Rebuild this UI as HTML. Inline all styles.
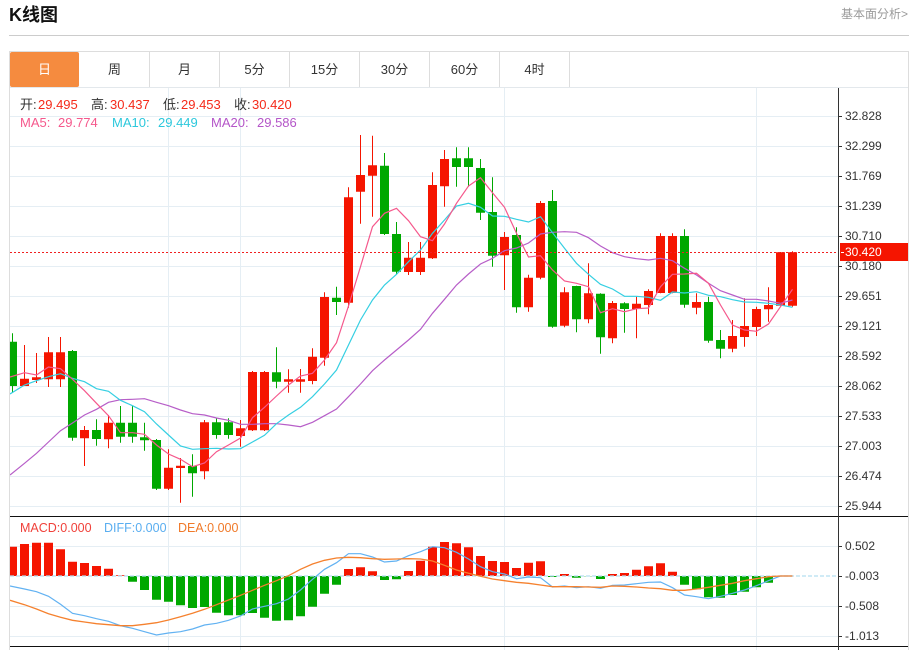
<!DOCTYPE html>
<html lang="zh">
<head>
<meta charset="utf-8">
<title>K线图</title>
<style>
html,body{margin:0;padding:0;background:#fff;}
body{width:911px;height:650px;position:relative;overflow:hidden;font-family:"Liberation Sans","Noto Sans CJK SC",sans-serif;}
.t{position:absolute;white-space:pre;line-height:16px;}
.tab{position:absolute;top:52px;height:35px;line-height:36px;width:69px;text-align:center;font-size:13px;color:#333;border-right:1px solid #ddd;}
.tab.on{left:10px;background:#f58b3f;color:#fff;border-right:0;width:69px;border-radius:2px;}
.ax{position:absolute;left:845px;font-size:12px;line-height:14px;color:#333;}
.lg{font-size:13px;}
</style>
</head>
<body>
<div class="t" style="left:9px;top:5px;font-size:18px;line-height:21px;font-weight:bold;color:#111;">K线图</div>
<div class="t" style="left:841px;top:6px;font-size:12px;color:#9a9a9a;">基本面分析&gt;</div>
<div style="position:absolute;left:9px;top:35px;width:900px;height:1px;background:#ccc;"></div>
<div style="position:absolute;left:9px;top:51px;width:900px;height:1px;background:#ddd;"></div>
<div style="position:absolute;left:9px;top:87px;width:900px;height:1px;background:#e3e8ec;"></div>
<div style="position:absolute;left:9px;top:51px;width:1px;height:599px;background:#ddd;"></div>
<div style="position:absolute;left:908px;top:51px;width:1px;height:599px;background:#ddd;"></div>
<div class="tab on">日</div>
<div class="tab" style="left:80px;">周</div>
<div class="tab" style="left:150px;">月</div>
<div class="tab" style="left:220px;">5分</div>
<div class="tab" style="left:290px;">15分</div>
<div class="tab" style="left:360px;">30分</div>
<div class="tab" style="left:430px;">60分</div>
<div class="tab" style="left:500px;">4时</div>

<svg width="911" height="650" viewBox="0 0 911 650" style="position:absolute;left:0;top:0;">
<clipPath id="c"><rect x="10" y="88" width="828" height="562"/></clipPath>
<g stroke="#e5eef4" stroke-width="1" fill="none">
<path d="M10 116.5H838M10 146.5H838M10 176.5H838M10 206.5H838M10 236.5H838M10 266.5H838M10 296.5H838M10 326.5H838M10 356.5H838M10 386.5H838M10 416.5H838M10 446.5H838M10 476.5H838M10 506.5H838M10 546.5H838M10 606.5H838M10 636.5H838"/>
<path d="M168.5 88V650M240.5 88V650M504.5 88V650M756.5 88V650"/>
</g>
<g clip-path="url(#c)">
<path fill="#f51500" d="M20 378.7h9V386h-9zM24 345h1V386h-1zM32 377.3h9V380h-9zM36 353h1V383h-1zM44 352.3h9V379.3h-9zM48 337h1V387h-1zM56 352.3h9V379.3h-9zM60 337h1V387h-1zM80 430h9V438.3h-9zM84 426h1V466h-1zM104 422.7h9V439.3h-9zM108 415h1V448.3h-1zM164 467.7h9V488.7h-9zM168 449.3h1V490h-1zM176 465.7h9V468h-9zM180 458h1V502.7h-1zM200 422.3h9V471.3h-9zM204 420h1V479.3h-1zM236 428.3h9V436h-9zM240 420h1V446.7h-1zM248 372h9V430.3h-9zM252 371h1V431h-1zM260 372h9V430.3h-9zM264 371h1V431h-1zM284 379.3h9V381.7h-9zM288 369.3h1V392.7h-1zM296 379.3h9V381.7h-9zM300 369h1V392.7h-1zM308 356.7h9V381h-9zM312 348.3h1V384.3h-1zM320 297h9V357.7h-9zM324 292.3h1V365.7h-1zM344 197.3h9V302.7h-9zM348 187.3h1V307.7h-1zM356 175h9V191.7h-9zM360 135h1V223.7h-1zM368 165.3h9V175.7h-9zM372 135.7h1V216.7h-1zM404 257.7h9V272h-9zM408 242h1V275h-1zM416 257.7h9V272h-9zM420 242h1V275h-1zM428 185h9V258.3h-9zM432 172.3h1V259h-1zM440 159h9V186.3h-9zM444 150h1V206.7h-1zM500 237h9V255.3h-9zM504 232h1V290h-1zM524 277.7h9V307.3h-9zM528 274.7h1V311.7h-1zM536 203h9V277.7h-9zM540 201h1V279.3h-1zM560 292.3h9V325.7h-9zM564 287.3h1V327.3h-1zM584 293.3h9V319.3h-9zM588 263.3h1V323.3h-1zM608 303h9V338.3h-9zM612 301h1V343.3h-1zM632 303.7h9V309h-9zM636 296.7h1V338.3h-1zM644 291h9V305h-9zM648 289.3h1V314.3h-1zM656 236h9V293h-9zM660 233.3h1V293.3h-1zM668 236h9V293h-9zM672 233.3h1V293.3h-1zM692 302h9V307.7h-9zM696 293.3h1V314.3h-1zM728 336h9V348.7h-9zM732 320h1V352.3h-1zM740 326h9V337h-9zM744 298.3h1V346.7h-1zM752 309h9V327h-9zM756 306.7h1V336h-1zM764 305h9V309.3h-9zM768 287.3h1V321.7h-1zM776 252.3h9V305.7h-9zM780 252h1V306h-1zM788 252.3h9V305.7h-9zM792 251.3h1V306.7h-1z"/>
<path fill="#00a800" d="M10 341.7h7V386h-7zM12 333.3h1V393h-1zM68 351h9V437.7h-9zM72 350h1V440.7h-1zM92 430h9V439h-9zM96 419.3h1V445.7h-1zM116 422.7h9V436.7h-9zM120 406h1V442.7h-1zM128 422.7h9V436.7h-9zM132 406h1V442.7h-1zM140 437.3h9V440.3h-9zM144 422.7h1V450.7h-1zM152 440h9V488.7h-9zM156 439h1V490h-1zM188 466h9V473.3h-9zM192 454.3h1V496.7h-1zM212 422.3h9V435h-9zM216 418.3h1V438.7h-1zM224 422.3h9V435h-9zM228 418.3h1V438.7h-1zM272 372.3h9V381.7h-9zM276 347.3h1V388.3h-1zM332 297.7h9V302h-9zM336 286.7h1V315h-1zM380 165.7h9V234h-9zM384 153h1V235h-1zM392 234h9V271.7h-9zM396 222h1V274h-1zM452 158.3h9V167h-9zM456 147.3h1V186.7h-1zM464 158.3h9V167h-9zM468 147.3h1V186.7h-1zM476 168h9V212.7h-9zM480 159h1V220h-1zM488 212h9V255.7h-9zM492 177.3h1V266.7h-1zM512 235h9V307.3h-9zM516 227.3h1V312.7h-1zM548 201h9V326.7h-9zM552 190h1V327.7h-1zM572 286h9V319.3h-9zM576 285.7h1V332.3h-1zM596 293.7h9V337.3h-9zM600 293.3h1V353.7h-1zM620 303.3h9V309h-9zM624 302.3h1V332.7h-1zM680 236h9V304.7h-9zM684 229.3h1V307.7h-1zM704 302h9V340.7h-9zM708 296.7h1V342.7h-1zM716 340h9V348.7h-9zM720 330h1V358.3h-1z"/>
<polyline fill="none" stroke="#b75ec8" stroke-width="1.2" points="10,475 24.5,463.3 36.5,453.3 48.5,442 60.5,430.7 72.5,423 84.5,415 96.5,409.3 108.5,402.3 120.5,399.7 132.5,399.3 144.5,398.7 156.5,402.3 168.5,405.7 180.5,410 192.5,413.7 204.5,415 216.5,418 228.5,420.3 240.5,424.3 252.5,424.3 264.5,423.7 276.5,423.7 288.5,425 300.5,426.7 312.5,422.3 324.5,415.7 336.5,409 348.5,396.7 360.5,384 372.5,370.7 384.5,360 396.5,350 408.5,340 420.5,329.3 432.5,313.3 444.5,299.3 456.5,285 468.5,274 480.5,264 492.5,258.3 504.5,250.7 516.5,248 528.5,243 540.5,234 552.5,232.3 564.5,231.7 576.5,232.3 588.5,237.7 600.5,246 612.5,252.7 624.5,256.7 636.5,258.7 648.5,260 660.5,258.3 672.5,260.7 684.5,268.3 696.5,275 708.5,283.3 720.5,290.7 732.5,295 744.5,299.3 756.5,299.3 768.5,301 780.5,303.3 792.5,300"/>
<polyline fill="none" stroke="#35cfe2" stroke-width="1.2" points="10,394 24.5,385 36.5,380.7 48.5,376.7 60.5,373.7 72.5,378.3 84.5,381.7 96.5,388.7 108.5,391.3 120.5,400.3 132.5,405.7 144.5,411.7 156.5,424 168.5,435 180.5,446 192.5,449.3 204.5,448.7 216.5,448.3 228.5,449 240.5,448.7 252.5,442 264.5,435.3 276.5,423.7 288.5,415 300.5,407.3 312.5,396.7 324.5,384 336.5,370 348.5,345 360.5,320 372.5,300 384.5,285 396.5,274.3 408.5,261.7 420.5,250 432.5,233.3 444.5,220 456.5,206 468.5,203.3 480.5,207.3 492.5,216 504.5,216.3 516.5,219.3 528.5,222 540.5,216.7 552.5,232.7 564.5,248.3 576.5,263.3 588.5,274.3 600.5,284.3 612.5,289 624.5,296.3 636.5,296.3 648.5,297.3 660.5,300.3 672.5,292 684.5,293 696.5,291.7 708.5,295.3 720.5,296.7 732.5,299.7 744.5,302 756.5,302.3 768.5,303.3 780.5,305 792.5,307.3"/>
<polyline fill="none" stroke="#f5588c" stroke-width="1.2" points="10,377 24.5,372.7 36.5,375 48.5,367 60.5,368.7 72.5,379.3 84.5,390.7 96.5,403.3 108.5,415.7 120.5,432.7 132.5,432.7 144.5,434.3 156.5,445 168.5,454 180.5,459.3 192.5,466.7 204.5,463 216.5,451.7 228.5,445 240.5,438 252.5,417.7 264.5,407.3 276.5,396 288.5,385 300.5,376 312.5,373.3 324.5,360 336.5,342.7 348.5,306 360.5,266.7 372.5,226.7 384.5,213.3 396.5,208.3 408.5,220.7 420.5,236.7 432.5,240.7 444.5,224 456.5,203.3 468.5,186 480.5,177.7 492.5,192.7 504.5,207.3 516.5,233.3 528.5,257 540.5,255.7 552.5,270 564.5,281 576.5,283.3 588.5,286.7 600.5,312.7 612.5,308.7 624.5,311.7 636.5,308.7 648.5,308 660.5,286.7 672.5,274.3 684.5,274 696.5,273.3 708.5,283.3 720.5,305 732.5,325 744.5,330 756.5,331.3 768.5,324 780.5,306.7 792.5,289.3"/>
<path d="M10 252.5H838" stroke="#f02020" stroke-width="1" stroke-dasharray="2 2" fill="none"/>
<path fill="#f51500" d="M10 546.7h7V576h-7zM20 544h9V576h-9zM32 542.7h9V576h-9zM44 542.7h9V576h-9zM56 549.3h9V576h-9zM68 561.7h9V576h-9zM80 563h9V576h-9zM92 566h9V576h-9zM104 568.7h9V576h-9zM116 575.3h9V576h-9zM344 569h9V576h-9zM356 567.3h9V576h-9zM368 571.3h9V576h-9zM404 571h9V576h-9zM416 560.7h9V576h-9zM428 546.7h9V576h-9zM440 542h9V576h-9zM452 543.3h9V576h-9zM464 547.3h9V576h-9zM476 556h9V576h-9zM488 561h9V576h-9zM500 562h9V576h-9zM512 568h9V576h-9zM524 562.7h9V576h-9zM536 561.3h9V576h-9zM560 574h9V576h-9zM608 574h9V576h-9zM620 573h9V576h-9zM632 569.7h9V576h-9zM644 566.3h9V576h-9zM656 563.3h9V576h-9zM668 571.7h9V576h-9z"/>
<path fill="#00a800" d="M128 576h9V581.7h-9zM140 576h9V590h-9zM152 576h9V599.7h-9zM164 576h9V601.7h-9zM176 576h9V605.3h-9zM188 576h9V608h-9zM200 576h9V607h-9zM212 576h9V612.7h-9zM224 576h9V615.3h-9zM236 576h9V615.3h-9zM248 576h9V613h-9zM260 576h9V617.7h-9zM272 576h9V620.7h-9zM284 576h9V620.3h-9zM296 576h9V616.3h-9zM308 576h9V606.7h-9zM320 576h9V593.7h-9zM332 576h9V584.7h-9zM380 576h9V580h-9zM392 576h9V579.3h-9zM548 576h9V577h-9zM572 576h9V577.7h-9zM584 576h9V576.3h-9zM596 576h9V579h-9zM680 576h9V584.7h-9zM692 576h9V589.3h-9zM704 576h9V597.3h-9zM716 576h9V597.7h-9zM728 576h9V595h-9zM740 576h9V591.7h-9zM752 576h9V587.3h-9zM764 576h9V582.7h-9z"/>
<path d="M10 576H838" stroke="#b5dff0" stroke-width="1.2" stroke-dasharray="4 2" fill="none"/>
<polyline fill="none" stroke="#62b2f2" stroke-width="1.2" points="10,586 24.5,589 36.5,591.7 48.5,596.3 60.5,604.3 72.5,613.3 84.5,615.7 96.5,618.7 108.5,621.3 120.5,625.7 132.5,628.3 144.5,631.7 156.5,635 168.5,633 180.5,631.7 192.5,629 204.5,625 216.5,623.3 228.5,620.3 240.5,616 252.5,609 264.5,606.3 276.5,603.7 288.5,599 300.5,590 312.5,579.3 324.5,569.3 336.5,562.7 348.5,553.7 360.5,553.7 372.5,557 384.5,562 396.5,561 408.5,555.7 420.5,551.7 432.5,546.7 444.5,547.7 456.5,552.3 468.5,559 480.5,566.7 492.5,571.7 504.5,574 516.5,578.7 528.5,577 540.5,577.7 552.5,587 564.5,586 576.5,587.7 588.5,586.7 600.5,588.3 612.5,585.3 624.5,585 636.5,583.7 648.5,582.3 660.5,582 672.5,587.7 684.5,595 696.5,596.7 708.5,598.7 720.5,596.3 732.5,593.3 744.5,590 756.5,585.7 768.5,580.7 780.5,576 792.5,576"/>
<polyline fill="none" stroke="#f5812e" stroke-width="1.3" points="10,600.3 24.5,604.7 36.5,609 48.5,613.7 60.5,617.3 72.5,620.3 84.5,622 96.5,623.7 108.5,624.7 120.5,625.7 132.5,625.7 144.5,624.3 156.5,622.7 168.5,620 180.5,616.7 192.5,613.3 204.5,609.3 216.5,604.7 228.5,600 240.5,595.3 252.5,590.3 264.5,585.3 276.5,580.7 288.5,575.7 300.5,569.3 312.5,564 324.5,560.3 336.5,558 348.5,557.3 360.5,557.7 372.5,558.7 384.5,559.3 396.5,559 408.5,558.7 420.5,559 432.5,561 444.5,565.3 456.5,570 468.5,573.3 480.5,576.3 492.5,579 504.5,580.7 516.5,582.3 528.5,583.3 540.5,585 552.5,586.7 564.5,586.7 576.5,586.7 588.5,587 600.5,587.3 612.5,586 624.5,586.3 636.5,587 648.5,588 660.5,588.7 672.5,590.3 684.5,590.3 696.5,589 708.5,587.3 720.5,585.3 732.5,583.3 744.5,580.7 756.5,578.7 768.5,576.7 780.5,576 792.5,576"/>
</g>
<path d="M10 516.5H908M10 646.5H908" stroke="#111" stroke-width="1" fill="none"/>
<path d="M838.5 88V650" stroke="#333" stroke-width="1" fill="none"/>
<path d="M839 116.5h3M839 146.5h3M839 176.5h3M839 206.5h3M839 236.5h3M839 266.5h3M839 296.5h3M839 326.5h3M839 356.5h3M839 386.5h3M839 416.5h3M839 446.5h3M839 476.5h3M839 506.5h3M839 546.5h3M839 576.5h3M839 606.5h3M839 636.5h3" stroke="#333" stroke-width="1" fill="none"/>
<rect x="840" y="243" width="68" height="18" fill="#f51500"/>
<path d="M841 252.5h3" stroke="#fff" stroke-width="1"/>
</svg>

<div class="t lg" style="left:20px;top:97px;color:#333;">开:</div>
<div class="t lg" style="left:38px;top:97px;color:#f52a1a;">29.495</div>
<div class="t lg" style="left:91px;top:97px;color:#333;">高:</div>
<div class="t lg" style="left:110px;top:97px;color:#f52a1a;">30.437</div>
<div class="t lg" style="left:163px;top:97px;color:#333;">低:</div>
<div class="t lg" style="left:181px;top:97px;color:#f52a1a;">29.453</div>
<div class="t lg" style="left:234px;top:97px;color:#333;">收:</div>
<div class="t lg" style="left:252px;top:97px;color:#f52a1a;">30.420</div>
<div class="t lg" style="left:20px;top:115px;color:#f5588c;">MA5:</div>
<div class="t lg" style="left:58px;top:115px;color:#f5588c;">29.774</div>
<div class="t lg" style="left:112px;top:115px;color:#2cc8dc;">MA10:</div>
<div class="t lg" style="left:158px;top:115px;color:#2cc8dc;">29.449</div>
<div class="t lg" style="left:211px;top:115px;color:#b455c8;">MA20:</div>
<div class="t lg" style="left:257px;top:115px;color:#b455c8;">29.586</div>
<div class="t" style="left:20px;top:520px;font-size:12.5px;color:#f0413a;">MACD:0.000</div>
<div class="t" style="left:104px;top:520px;font-size:12.5px;color:#5aaef0;">DIFF:0.000</div>
<div class="t" style="left:178px;top:520px;font-size:12.5px;color:#f07a2a;">DEA:0.000</div>

<div class="ax" style="top:109px;">32.828</div>
<div class="ax" style="top:139px;">32.299</div>
<div class="ax" style="top:169px;">31.769</div>
<div class="ax" style="top:199px;">31.239</div>
<div class="ax" style="top:229px;">30.710</div>
<div class="ax" style="top:245px;color:#fff;">30.420</div>
<div class="ax" style="top:259px;">30.180</div>
<div class="ax" style="top:289px;">29.651</div>
<div class="ax" style="top:319px;">29.121</div>
<div class="ax" style="top:349px;">28.592</div>
<div class="ax" style="top:379px;">28.062</div>
<div class="ax" style="top:409px;">27.533</div>
<div class="ax" style="top:439px;">27.003</div>
<div class="ax" style="top:469px;">26.474</div>
<div class="ax" style="top:499px;">25.944</div>
<div class="ax" style="top:539px;">0.502</div>
<div class="ax" style="top:569px;">-0.003</div>
<div class="ax" style="top:599px;">-0.508</div>
<div class="ax" style="top:629px;">-1.013</div>
</body>
</html>
